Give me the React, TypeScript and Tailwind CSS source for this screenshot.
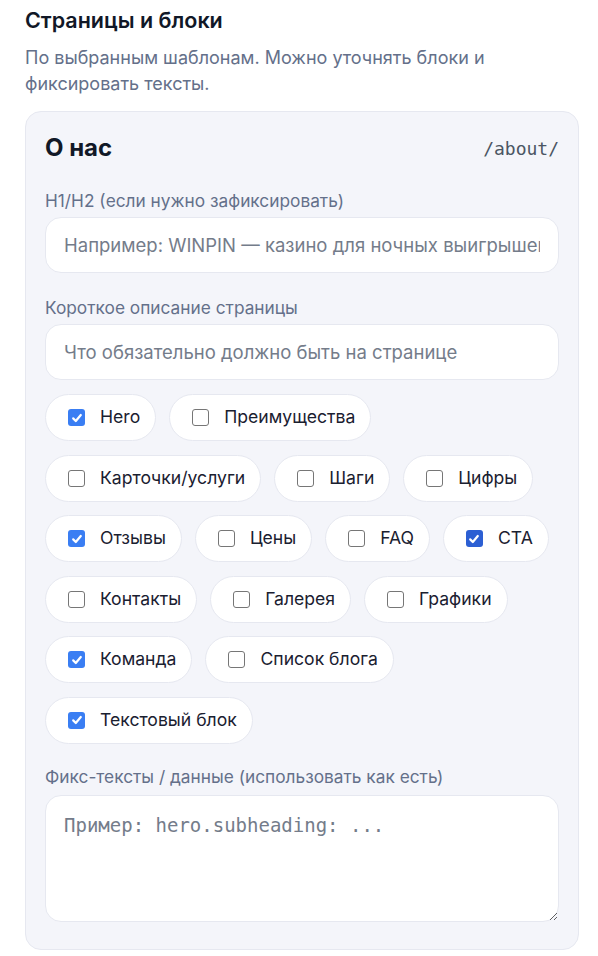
import React, { useState } from 'react';

interface Block {
  id: string;
  label: string;
  checked: boolean;
}

const initialBlocks: Block[] = [
  { id: 'hero', label: 'Hero', checked: true },
  { id: 'benefits', label: 'Преимущества', checked: false },
  { id: 'cards', label: 'Карточки/услуги', checked: false },
  { id: 'steps', label: 'Шаги', checked: false },
  { id: 'numbers', label: 'Цифры', checked: false },
  { id: 'reviews', label: 'Отзывы', checked: true },
  { id: 'prices', label: 'Цены', checked: false },
  { id: 'faq', label: 'FAQ', checked: false },
  { id: 'cta', label: 'CTA', checked: true },
  { id: 'contacts', label: 'Контакты', checked: false },
  { id: 'gallery', label: 'Галерея', checked: false },
  { id: 'charts', label: 'Графики', checked: false },
  { id: 'team', label: 'Команда', checked: true },
  { id: 'blog', label: 'Список блога', checked: false },
  { id: 'text', label: 'Текстовый блок', checked: true },
];

const font = { fontFamily: 'Inter, "Noto Sans", sans-serif' };
const mono = { fontFamily: '"DejaVu Sans Mono", "Liberation Mono", monospace' };

function Checkbox({ checked, dark }: { checked: boolean; dark?: boolean }) {
  if (checked) {
    return (
      <span
        className={`flex h-[17px] w-[17px] shrink-0 items-center justify-center rounded-[3px] ${
          dark ? 'bg-[#2c5fd3]' : 'bg-[#3a7ef3]'
        }`}
      >
        <svg width="12" height="12" viewBox="0 0 12 12" fill="none">
          <path d="M2.2 6.4 L4.8 9 L9.8 3" stroke="white" strokeWidth="2.2" strokeLinecap="round" strokeLinejoin="round" />
        </svg>
      </span>
    );
  }
  return <span className="h-[17px] w-[17px] shrink-0 rounded-[3px] border border-[#767676] bg-white" />;
}

export default function App() {
  const [blocks, setBlocks] = useState<Block[]>(initialBlocks);

  const toggle = (id: string) => {
    setBlocks(prev => prev.map(b => (b.id === id ? { ...b, checked: !b.checked } : b)));
  };

  return (
    <div className="min-h-screen bg-white pl-[25px] pr-[19px] pt-[7px]" style={font}>
      <h2 className="text-[21.5px] font-semibold leading-[26px] text-[#111827]">Страницы и блоки</h2>
      <p className="mt-[12px] max-w-[520px] text-[18px] leading-[26px] text-[#64708a]">
        По выбранным шаблонам. Можно уточнять блоки и фиксировать тексты.
      </p>

      <div className="mt-[14px] rounded-[16px] border border-[#e6e8f0] bg-[#f4f5fa] px-[19px] pb-[27px] pt-[20px]">
        <div className="flex items-center justify-between">
          <div className="text-[24px] font-bold leading-[32px] text-[#111827]">О нас</div>
          <div className="text-[18px] text-[#4b5563]" style={mono}>
            /about/
          </div>
        </div>

        <label className="mt-[25px] block text-[17.3px] leading-[24px] text-[#64708a]">H1/H2 (если нужно зафиксировать)</label>
        <input
          className="mt-[4px] h-[56px] w-full rounded-[16px] border border-[#e6e8f0] bg-white px-[18px] text-[18.5px] text-[#111827] outline-none placeholder:text-[#747c8a]"
          placeholder="Например: WINPIN — казино для ночных выигрышей"
        />

        <label className="mt-[23px] block text-[17.3px] leading-[24px] text-[#64708a]">Короткое описание страницы</label>
        <input
          className="mt-[4px] h-[56px] w-full rounded-[16px] border border-[#e6e8f0] bg-white px-[18px] text-[18.5px] text-[#111827] outline-none placeholder:text-[#747c8a]"
          placeholder="Что обязательно должно быть на странице"
        />

        <div className="mt-[14px] flex flex-wrap gap-x-[13px] gap-y-[13.5px]">
          {blocks.map(b => (
            <button
              key={b.id}
              type="button"
              onClick={() => toggle(b.id)}
              className="flex h-[47px] items-center gap-[15px] rounded-full border border-[#e6e8f0] bg-white pl-[22px] pr-[15px] text-[17.6px] text-[#1a2030]"
            >
              <Checkbox checked={b.checked} dark={b.id === 'cta'} />
              <span>{b.label}</span>
            </button>
          ))}
        </div>

        <label className="mt-[21.5px] block text-[17.3px] leading-[24px] text-[#64708a]">
          Фикс-тексты / данные (использовать как есть)
        </label>
        <textarea
          className="mt-[6px] block h-[127px] w-full rounded-[16px] border border-[#e6e8f0] bg-white px-[18px] py-[15px] text-[19px] text-[#111827] outline-none placeholder:text-[#747c8a]"
          style={mono}
          placeholder="Пример: hero.subheading: ..."
        />
      </div>
    </div>
  );
}
